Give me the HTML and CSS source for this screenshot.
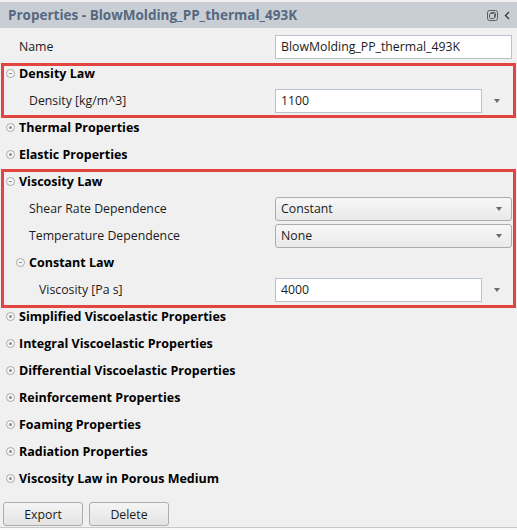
FILE: index.html
```html
<!DOCTYPE html>
<html lang="en">
<head>
    <meta charset="UTF-8">
    <title>Properties</title>
    <link rel="stylesheet" href="styles.css">
</head>
<body>
    <div class="panel">
        <div class="titlebar">
            <span class="title">Properties - BlowMolding_PP_thermal_493K</span>
            <span class="tools">
                <svg width="11" height="11" viewBox="0 0 11 11"><rect x="0.5" y="0.5" width="10" height="10" rx="2" fill="none" stroke="#5c5c5c"/><rect x="3.5" y="2.5" width="5" height="5" rx="1" fill="none" stroke="#5c5c5c"/><rect x="2.5" y="3.5" width="5" height="5" rx="1" fill="#c9ced5" stroke="#5c5c5c"/></svg>
                <svg width="6" height="9" viewBox="0 0 6 9"><path d="M5 1 L1.5 4.5 L5 8" fill="none" stroke="#3c3c3c" stroke-width="1.4"/></svg>
            </span>
        </div>

        <div class="rows">
            <div class="row">
                <div class="label lvl-0">Name</div>
                <div class="value"><div class="field">BlowMolding_PP_thermal_493K</div></div>
            </div>

            <div class="row section">
                <div class="label"><span class="toggle open"></span>Density Law</div>
            </div>
            <div class="row">
                <div class="label lvl-1">Density [kg/m^3]</div>
                <div class="value"><div class="field">1100</div><span class="drop"><span class="arrow"></span></span></div>
            </div>

            <div class="row section">
                <div class="label"><span class="toggle"></span>Thermal Properties</div>
            </div>
            <div class="row section">
                <div class="label"><span class="toggle"></span>Elastic Properties</div>
            </div>

            <div class="row section">
                <div class="label"><span class="toggle open"></span>Viscosity Law</div>
            </div>
            <div class="row">
                <div class="label lvl-1">Shear Rate Dependence</div>
                <div class="value"><div class="combo">Constant<span class="arrow"></span></div></div>
            </div>
            <div class="row">
                <div class="label lvl-1">Temperature Dependence</div>
                <div class="value"><div class="combo">None<span class="arrow"></span></div></div>
            </div>
            <div class="row section sub">
                <div class="label"><span class="toggle open"></span>Constant Law</div>
            </div>
            <div class="row">
                <div class="label lvl-2">Viscosity [Pa s]</div>
                <div class="value"><div class="field">4000</div><span class="drop"><span class="arrow"></span></span></div>
            </div>

            <div class="row section">
                <div class="label"><span class="toggle"></span>Simplified Viscoelastic Properties</div>
            </div>
            <div class="row section">
                <div class="label"><span class="toggle"></span>Integral Viscoelastic Properties</div>
            </div>
            <div class="row section">
                <div class="label"><span class="toggle"></span>Differential Viscoelastic Properties</div>
            </div>
            <div class="row section">
                <div class="label"><span class="toggle"></span>Reinforcement Properties</div>
            </div>
            <div class="row section">
                <div class="label"><span class="toggle"></span>Foaming Properties</div>
            </div>
            <div class="row section">
                <div class="label"><span class="toggle"></span>Radiation Properties</div>
            </div>
            <div class="row section">
                <div class="label"><span class="toggle"></span>Viscosity Law in Porous Medium</div>
            </div>
        </div>

        <div class="actions">
            <button type="button">Export</button>
            <button type="button">Delete</button>
        </div>
        <div class="footer"></div>

        <!-- annotation boxes -->
        <div class="mark mark-density"></div>
        <div class="mark mark-viscosity"></div>
    </div>
</body>
</html>
```

FILE: styles.css
```css
body {
    margin: 0;
    background-color: #f0f0f0;
    font-family: "Open Sans", "Noto Sans", sans-serif;
    font-size: 12.3px;
    color: #1b1b1b;
}
.panel {
    position: relative;
    height: 530px;
    padding-top: 2px;
    box-sizing: border-box;
    overflow: hidden;
}
.titlebar {
    height: 26px;
    background-color: #c9ced5;
    display: flex;
    align-items: center;
    padding: 0 8px;
}
.title {
    flex: 1;
    font-weight: bold;
    font-size: 13.5px;
    color: #56687f;
}
.tools {
    display: flex;
    align-items: center;
    gap: 6px;
    margin-right: -1px;
}
.rows {
    padding-top: 5px;
}
.row {
    height: 27px;
    display: flex;
    align-items: center;
}
.label {
    width: 275px;
    flex: none;
    box-sizing: border-box;
    display: flex;
    align-items: center;
}
.lvl-0 { padding-left: 19px; }
.lvl-1 { padding-left: 29px; }
.lvl-2 { padding-left: 39px; }
.section .label {
    padding-left: 6px;
    font-weight: bold;
    font-size: 12.5px;
    color: #000;
}
.section.sub .label {
    padding-left: 16px;
}
.toggle {
    width: 7px;
    height: 7px;
    margin-right: 4px;
    border: 1px solid #a9a9a9;
    border-radius: 50%;
    background-color: #f7f7f7;
    position: relative;
    flex: none;
}
.toggle::after {
    content: "";
    position: absolute;
    left: 2px;
    top: 2px;
    width: 3px;
    height: 3px;
    border-radius: 50%;
    background-color: #8c8c8c;
}
.toggle.open::after {
    left: 2px;
    top: 3px;
    width: 3px;
    height: 1px;
    border-radius: 0;
}
.value {
    width: 237px;
    display: flex;
    align-items: center;
}
.field {
    flex: 1;
    height: 24px;
    box-sizing: border-box;
    padding: 0 5px;
    line-height: 22px;
    background-color: #fff;
    border: 1px solid #b9c3cf;
}
.drop {
    width: 30px;
    display: flex;
    justify-content: center;
}
.arrow {
    width: 0;
    height: 0;
    border-left: 3.5px solid transparent;
    border-right: 3.5px solid transparent;
    border-top: 4px solid #6a6a6a;
}
.combo {
    flex: 1;
    height: 24px;
    box-sizing: border-box;
    padding: 0 9px 0 5px;
    display: flex;
    align-items: center;
    justify-content: space-between;
    border: 1px solid #acacac;
    border-radius: 3px;
    background: linear-gradient(#f7f7f7, #e9e9e9);
}
.actions {
    display: flex;
    gap: 6px;
    padding-left: 3px;
    margin-top: 10px;
}
button {
    width: 80px;
    height: 24px;
    font-family: inherit;
    font-size: 12.3px;
    color: #1b1b1b;
    border: 1px solid #adadad;
    border-radius: 3px;
    background: linear-gradient(#f5f5f5, #e3e3e3);
}
.footer {
    margin-top: 1px;
    height: 10px;
    border-top: 1px solid #c8c8c8;
    background-color: #fafafa;
}
.mark {
    position: absolute;
    left: 1px;
    right: 1px;
    border: 3px solid #e2453f;
}
.mark-density {
    top: 63px;
    height: 49px;
}
.mark-viscosity {
    top: 169px;
    height: 133px;
}
```
